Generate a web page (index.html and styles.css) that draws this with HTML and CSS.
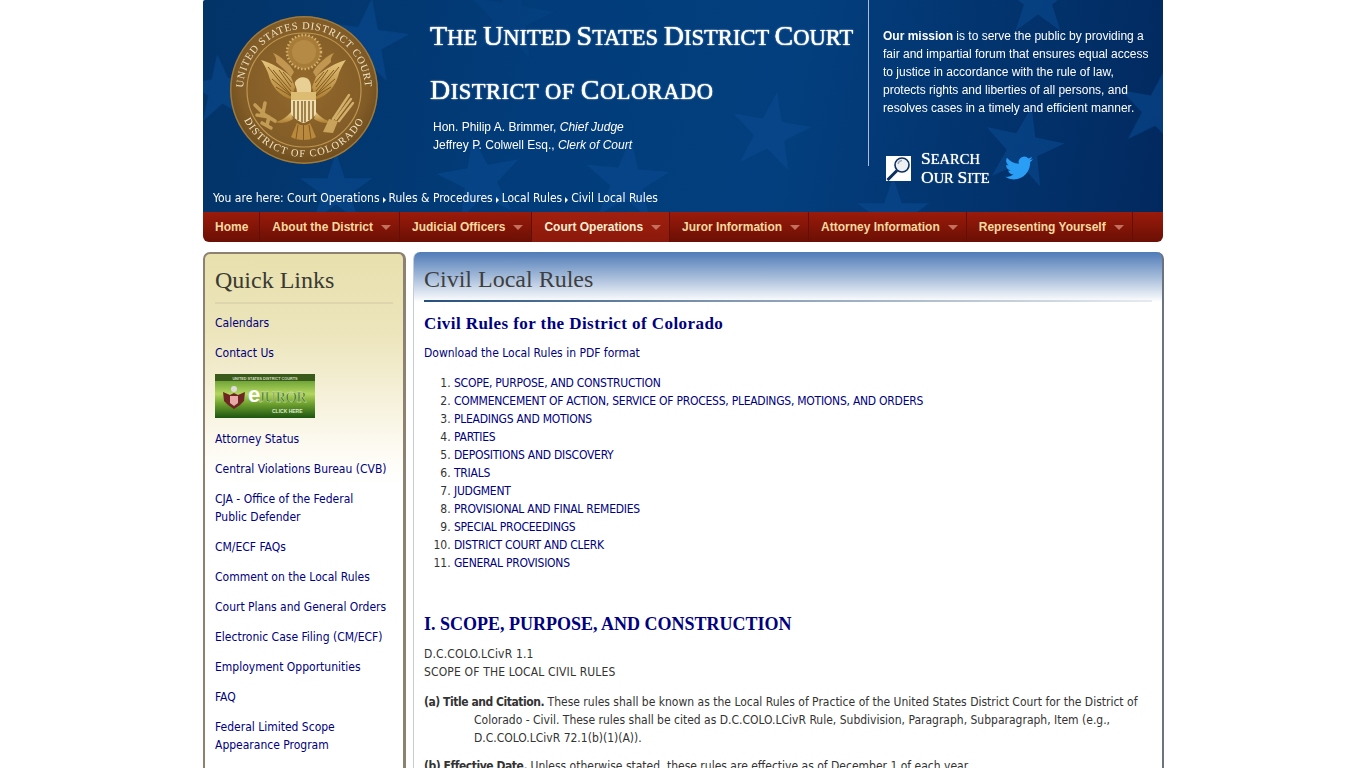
FILE: index.html
```html
<!DOCTYPE html>
<html lang="en">
<head>
<meta charset="utf-8">
<title>Civil Local Rules - District of Colorado</title>
<link rel="stylesheet" href="styles.css">
</head>
<body>
<div class="page">
  <header class="masthead">
    <svg class="stars" viewBox="0 0 960 212" aria-hidden="true">
      <defs>
        <polygon id="star" points="0,-1 .23,-.31 .95,-.31 .37,.12 .59,.81 0,.38 -.59,.81 -.37,.12 -.95,-.31 -.23,-.31"/>
      </defs>
      <g class="star-a">
        <use href="#star" transform="translate(163,42) rotate(8) scale(44)"/>
        <use href="#star" transform="translate(18,90) rotate(-6) scale(36)"/>
        <use href="#star" transform="translate(133,190) rotate(0) scale(38)"/>
        <use href="#star" transform="translate(277,180) rotate(-10) scale(44)"/>
        <use href="#star" transform="translate(424,182) rotate(5) scale(44)"/>
        <use href="#star" transform="translate(567,133) rotate(10) scale(42)"/>
        <use href="#star" transform="translate(820,148) rotate(12) scale(42)"/>
        <use href="#star" transform="translate(955,110) rotate(10) scale(42)"/>
        <use href="#star" transform="translate(690,215) rotate(0) scale(38)"/>
        <use href="#star" transform="translate(835,0) rotate(0) scale(38)"/>
      </g>
      <g class="star-b">
        <use href="#star" transform="translate(307,18) rotate(10) scale(44)"/>
      </g>
    </svg>
    <div class="mast-main">
      <svg class="seal" viewBox="0 0 150 150" role="img" aria-label="Seal of the United States District Court">
        <defs>
          <radialGradient id="sealFill" cx=".5" cy=".45" r=".55">
            <stop offset="0" stop-color="#94692c"/>
            <stop offset=".8" stop-color="#825c27"/>
            <stop offset="1" stop-color="#6e4d1e"/>
          </radialGradient>
          <linearGradient id="gold" x1="0" y1="0" x2="0" y2="1">
            <stop offset="0" stop-color="#e6c67c"/>
            <stop offset="1" stop-color="#ad7e32"/>
          </linearGradient>
          <path id="arcTop" d="M14 75 a61 61 0 0 1 122 0"/>
          <path id="arcBot" d="M8 75 a67 67 0 0 0 134 0"/>
          <g id="wing">
            <path d="M32 45 C42 48 54 54 62 62 L66 72 L62 84 C52 82 42 72 39 58 C37 53 35 49 32 45Z" fill="url(#gold)"/>
            <path d="M62 80 L39 52 M62 80 L43 64 M62 81 L47 72 M62 76 L44 55 M62 72 L50 55 M63 68 L54 57" stroke="#805a20" stroke-width="1" fill="none"/>
            <path d="M44 38 C50 40 62 50 65 57 L62 62 C57 55 50 50 47 47 C48 44 46 41 44 38Z" fill="#c09650"/>
            <path d="M46 107 C52 106 58 102 62 97 L64 104 C58 108 52 109 46 107Z" fill="url(#gold)"/>
          </g>
        </defs>
        <circle cx="75" cy="75" r="74" fill="#a17a3a"/>
        <circle cx="75" cy="75" r="72.5" fill="url(#sealFill)"/>
        <circle cx="75" cy="75" r="57" fill="none" stroke="#bd9750" stroke-width="1.2"/>
        <text class="seal-text"><textPath href="#arcTop" startOffset="50%">UNITED STATES DISTRICT COURT</textPath></text>
        <text class="seal-text seal-text-low"><textPath href="#arcBot" startOffset="50%">DISTRICT OF COLORADO</textPath></text>
        <circle cx="75" cy="37" r="17" fill="#a67c38" stroke="#d6b06a" stroke-width="2.5" stroke-dasharray="1.5 2"/>
        <circle cx="75" cy="37" r="12" fill="#b58a45"/>
        <use href="#wing"/>
        <use href="#wing" transform="translate(149,0) scale(-1,1)"/>
        <path d="M68 78 C68 71 65 70 66 67 C69 61 77 61 80 65 C83 70 82 74 82 78Z" fill="#e8d094"/>
        <rect x="62" y="77" width="25" height="8" fill="#dcbb72"/>
        <path d="M62 85 H87 V99 C84 104 78 107 74.5 108 C71 107 65 104 62 99Z" fill="#eedfb2"/>
        <path d="M65 86 V103 M69 86 V105 M73 86 V107 M76 86 V107 M80 86 V105 M84 86 V103" stroke="#8a6628" stroke-width="1.5"/>
        <path d="M68 108 L62 122 C68 126 81 126 87 122 L81 108 C78 111 71 111 68 108Z" fill="#b98a3e"/>
        <path d="M69 110 L67 124 M74.5 110 V125 M80 110 L82 124" stroke="#805a20" stroke-width="1"/>
        <path d="M46 106 L33 98 M40 102 L28 100 M40 102 L38 110 M34 98 L26 90 M34 98 L36 88 M33 108 L42 113" stroke="#c29b55" stroke-width="3.6" stroke-linecap="round" fill="none"/>
        <path d="M104 104 L120 80 M107 104 L122 84 M110 106 L124 88" stroke="#d3b06a" stroke-width="2.4" stroke-linecap="round" fill="none"/>
        <path d="M100 104 L109 106 L104 118 L94 117Z" fill="#c9a35c"/>
      </svg>
      <div class="titles">
        <h1 class="court"><span class="cap">T</span>he <span class="cap">U</span>nited <span class="cap">S</span>tates <span class="cap">D</span>istrict <span class="cap">C</span>ourt</h1>
        <h2 class="court court-sub"><span class="cap">D</span>istrict of <span class="cap">C</span>olorado</h2>
        <p class="officers">Hon. Philip A. Brimmer, <em>Chief Judge</em><br>Jeffrey P. Colwell Esq., <em>Clerk of Court</em></p>
      </div>
      <aside class="mission">
        <p class="mission-text"><strong>Our mission</strong> is to serve the public by providing a fair and impartial forum that ensures equal access to justice in accordance with the rule of law, protects rights and liberties of all persons, and resolves cases in a timely and efficient manner.</p>
        <div class="mast-tools">
          <svg class="search-icon" viewBox="0 0 25 25" aria-hidden="true">
            <rect width="25" height="25" fill="#fff"/>
            <line x1="1.5" y1="24" x2="11" y2="14.5" stroke="#0b2f5e" stroke-width="3"/>
            <circle cx="16" cy="9" r="7" fill="#eef1f4" stroke="#0b2f5e" stroke-width="1.6"/>
            <path d="M12 8 a4.5 4.5 0 0 1 4 -3.5" stroke="#9aa6b4" stroke-width="1.4" fill="none"/>
          </svg>
          <span class="search-label"><span class="search-cap">S</span>earch<br><span class="search-cap">O</span>ur <span class="search-cap">S</span>ite</span>
          <svg class="twitter" viewBox="0 0 24 24" aria-hidden="true"><path d="M23.953 4.57a10 10 0 01-2.825.775 4.958 4.958 0 002.163-2.723c-.951.555-2.005.959-3.127 1.184a4.92 4.92 0 00-8.384 4.482C7.69 8.095 4.067 6.13 1.64 3.162a4.822 4.822 0 00-.666 2.475c0 1.71.87 3.213 2.188 4.096a4.904 4.904 0 01-2.228-.616v.06a4.923 4.923 0 003.946 4.827 4.996 4.996 0 01-2.212.085 4.936 4.936 0 004.604 3.417 9.867 9.867 0 01-6.102 2.105c-.39 0-.779-.023-1.17-.067a13.995 13.995 0 007.557 2.209c9.053 0 13.998-7.496 13.998-13.985 0-.21 0-.42-.015-.63A9.935 9.935 0 0024 4.59z"/></svg>
        </div>
      </aside>
    </div>
    <p class="crumbs">You are here: Court Operations<i class="crumb-arrow"></i>Rules &amp; Procedures<i class="crumb-arrow"></i>Local Rules<i class="crumb-arrow"></i>Civil Local Rules</p>
  </header>

  <nav class="mainnav">
    <a class="nav-item nav-home" href="#">Home</a>
    <a class="nav-item has-menu" href="#">About the District</a>
    <a class="nav-item has-menu" href="#">Judicial Officers</a>
    <a class="nav-item has-menu is-active" href="#">Court Operations</a>
    <a class="nav-item has-menu" href="#">Juror Information</a>
    <a class="nav-item has-menu" href="#">Attorney Information</a>
    <a class="nav-item has-menu" href="#">Representing Yourself</a>
  </nav>

  <div class="columns">
    <aside class="quick">
      <h2 class="quick-title">Quick Links</h2>
      <ul class="quick-list">
        <li><a href="#">Calendars</a></li>
        <li><a href="#">Contact Us</a></li>
        <li class="banner-row">
          <svg class="ejuror" viewBox="0 0 100 44" role="img" aria-label="eJuror, click here">
            <defs>
              <linearGradient id="ej" x1="0" y1="0" x2="0" y2="1">
                <stop offset="0" stop-color="#4b8a22"/>
                <stop offset=".45" stop-color="#b3d65f"/>
                <stop offset=".68" stop-color="#6ea12f"/>
                <stop offset="1" stop-color="#1c5410"/>
              </linearGradient>
            </defs>
            <rect width="100" height="44" fill="url(#ej)"/>
            <rect width="100" height="7" fill="#3a5a1c"/>
            <text class="ej-top" x="50" y="5.5" text-anchor="middle">UNITED STATES DISTRICT COURTS</text>
            <path d="M8 18 L15 21 L19 19 L23 21 L30 18 L29 27 L25 31 L19 35 L13 31 L9 27Z" fill="#6e2622"/>
            <path d="M15 22 H23 V29 L19 32 L15 29Z" fill="#e8a9a8"/>
            <circle cx="19" cy="15" r="3" fill="#ddd"/>
            <text class="ej-e" x="33" y="28">e</text>
            <text class="ej-main" x="44" y="28">JUROR</text>
            <text class="ej-click" x="57" y="38.5">CLICK HERE</text>
          </svg>
        </li>
        <li><a href="#">Attorney Status</a></li>
        <li><a href="#">Central Violations Bureau (CVB)</a></li>
        <li><a href="#">CJA - Office of the Federal Public Defender</a></li>
        <li><a href="#">CM/ECF FAQs</a></li>
        <li><a href="#">Comment on the Local Rules</a></li>
        <li><a href="#">Court Plans and General Orders</a></li>
        <li><a href="#">Electronic Case Filing (CM/ECF)</a></li>
        <li><a href="#">Employment Opportunities</a></li>
        <li><a href="#">FAQ</a></li>
        <li><a href="#">Federal Limited Scope Appearance Program</a></li>
      </ul>
    </aside>

    <main class="content">
      <h1 class="content-title">Civil Local Rules</h1>
      <div class="content-body">
        <h2 class="rules-title">Civil Rules for the District of Colorado</h2>
        <p class="block"><a href="#">Download the Local Rules in PDF format</a></p>
        <ol class="toc">
          <li><a href="#">SCOPE, PURPOSE, AND CONSTRUCTION</a></li>
          <li><a href="#">COMMENCEMENT OF ACTION, SERVICE OF PROCESS, PLEADINGS, MOTIONS, AND ORDERS</a></li>
          <li><a href="#">PLEADINGS AND MOTIONS</a></li>
          <li><a href="#">PARTIES</a></li>
          <li><a href="#">DEPOSITIONS AND DISCOVERY</a></li>
          <li><a href="#">TRIALS</a></li>
          <li><a href="#">JUDGMENT</a></li>
          <li><a href="#">PROVISIONAL AND FINAL REMEDIES</a></li>
          <li><a href="#">SPECIAL PROCEEDINGS</a></li>
          <li><a href="#">DISTRICT COURT AND CLERK</a></li>
          <li><a href="#">GENERAL PROVISIONS</a></li>
        </ol>
        <h2 class="section-title">I. SCOPE, PURPOSE, AND CONSTRUCTION</h2>
        <p class="block rule-id">D.C.COLO.LCivR 1.1<br>SCOPE OF THE LOCAL CIVIL RULES</p>
        <p class="block hanging"><strong>(a) Title and Citation.</strong> These rules shall be known as the Local Rules of Practice of the United States District Court for the District of Colorado - Civil. These rules shall be cited as D.C.COLO.LCivR Rule, Subdivision, Paragraph, Subparagraph, Item (e.g., D.C.COLO.LCivR 72.1(b)(1)(A)).</p>
        <p class="block hanging"><strong>(b) Effective Date.</strong> Unless otherwise stated, these rules are effective as of December 1 of each year.</p>
      </div>
    </main>
  </div>
</div>
</body>
</html>
```
FILE: styles.css
```css
* { box-sizing: border-box; }
html, body { margin: 0; padding: 0; height: 768px; overflow: hidden; background: #fff; }
body { font-family: "DejaVu Sans Condensed", "DejaVu Sans", sans-serif; font-stretch: condensed; font-size: 12px; line-height: 18px; color: #333; }
a { color: #000080; text-decoration: none; }
p, h1, h2, ul, ol { margin: 0; padding: 0; }

.page { width: 960px; margin: 0 auto; }

/* masthead */
.masthead { position: relative; height: 212px; overflow: hidden; background: linear-gradient(100deg, #033468 0%, #023c7a 35%, #033f7e 60%, #02295f 100%); border-top-left-radius: 2px; }
.stars { position: absolute; left: 0; top: 0; width: 960px; height: 212px; }
.star-a { fill: #0a4a8f; opacity: .6; }
.star-b { fill: #0a4a8f; opacity: .25; }
.mast-main { position: relative; display: flex; height: 189px; }
.seal { width: 150px; height: 150px; margin: 15px 0 0 26px; flex: none; }
.seal-text { font-family: "Liberation Serif", serif; font-size: 10.5px; fill: #efe3c2; text-anchor: middle; letter-spacing: .75px; font-stretch: normal; }
.seal-text-low { letter-spacing: 1.2px; }
.titles { width: 439px; margin-left: 51px; flex: none; padding-top: 19px; }
.court { font-family: "Liberation Serif", serif; font-stretch: normal; font-weight: 400; font-size: 22.5px; line-height: 34px; letter-spacing: .04px; text-transform: uppercase; color: #fff; -webkit-text-stroke: .2px #fff; text-shadow: 0 0 1px #fff, 0 0 2px rgba(190,215,245,.7); white-space: nowrap; }
.court .cap { font-size: 28px; }
.court-sub { margin-top: 18px; letter-spacing: .5px; }
.officers { margin: 9px 0 0 3px; font-family: "Liberation Sans", sans-serif; font-stretch: normal; color: #fff; }
.mission { width: 295px; flex: none; margin-left: -1px; height: 166px; border-left: 1px solid #a9bdd6; padding: 27px 0 0 14px; }
.mission-text { font-family: "Liberation Sans", sans-serif; font-stretch: normal; color: #fff; width: 270px; }
.mast-tools { display: flex; align-items: center; margin: 32px 0 0 3px; }
.search-icon { width: 25px; height: 25px; flex: none; }
.search-label { margin-left: 10px; width: 84px; font-family: "Liberation Serif", serif; font-stretch: normal; font-weight: 400; font-size: 14.5px; line-height: 18px; text-transform: uppercase; color: #fff; text-shadow: 0 0 1px #fff; white-space: nowrap; }
.search-cap { font-size: 17.5px; }
.twitter { width: 28px; height: 28px; fill: #2a9df4; flex: none; }
.crumbs { position: relative; margin-left: 10px; color: #fff; white-space: nowrap; }
.crumb-arrow { display: inline-block; width: 0; height: 0; margin: 0 3px 0 3px; border-left: 3px solid #fff; border-top: 3px solid transparent; border-bottom: 3px solid transparent; vertical-align: -1px; }

/* main navigation */
.mainnav { display: flex; height: 30px; background: linear-gradient(#9a1b0b, #6b0f05); border-radius: 0 0 6px 6px; overflow: hidden; }
.nav-item { display: block; padding: 0 8px 0 12px; line-height: 31px; font-family: "Liberation Sans", sans-serif; font-stretch: normal; font-weight: 700; color: #f9d99f; border-right: 1px solid #650e05; white-space: nowrap; }
.nav-home { padding-right: 11px; }
.nav-item.has-menu::after { content: ""; display: inline-block; width: 0; height: 0; margin-left: 8px; border-left: 5px solid transparent; border-right: 5px solid transparent; border-top: 5px solid #c5705c; vertical-align: 1px; }
.nav-item.is-active { background: linear-gradient(#a0200f, #8a190b); color: #fdeed0; }

/* columns */
.columns { display: flex; align-items: flex-start; gap: 7px; margin-top: 10px; }
.quick { width: 203px; flex: none; height: 700px; border: 2px solid #8d8272; border-right-width: 3px; border-radius: 7px 7px 0 0; background: linear-gradient(#e8e0ad 0, #ece5bc 80px, #f5f0d8 140px, #fcfaf0 190px, #fff 230px); padding: 10px 10px 0 10px; }
.quick-title { font-family: "Liberation Serif", serif; font-stretch: normal; font-weight: 400; font-size: 24px; line-height: 32px; color: #3a3a32; padding-bottom: 6px; border-bottom: 2px solid #dcd5ae; }
.quick-list { list-style: none; margin-top: 10px; padding-right: 5px; }
.quick-list li { margin-bottom: 12px; }
.quick-list .banner-row { height: 44px; margin-bottom: 12px; }
.ejuror { display: block; width: 100px; height: 44px; }
.ej-top { font-family: "Liberation Sans", sans-serif; font-size: 3.8px; font-weight: 700; fill: #d8dcc0; font-stretch: normal; }
.ej-e { font-family: "Liberation Sans", sans-serif; font-size: 22px; font-weight: 700; fill: #fff; font-stretch: normal; }
.ej-main { font-family: "Liberation Serif", serif; font-size: 15px; fill: #1d5a1a; stroke: #e8f3c8; stroke-width: .3px; font-stretch: normal; }
.ej-click { font-family: "Liberation Sans", sans-serif; font-size: 5px; font-weight: 700; fill: #dfe9c8; font-stretch: normal; }

.content { width: 751px; flex: none; height: 700px; border: 1px solid #c4ccd8; border-right: 2px solid #6c7280; border-top: 0; border-radius: 7px 7px 0 0; background: linear-gradient(#4f7bb7 0, #a8bedb 26px, #fff 50px); padding: 0 10px; }
.content-title { height: 50px; padding-top: 11px; font-family: "Liberation Serif", serif; font-stretch: normal; font-weight: 400; font-size: 24px; line-height: 32px; color: #3f3f3f; border-bottom: 2px solid; border-image: linear-gradient(90deg, #25507c, #7f95ae 40%, #e6ebf0 100%) 1; }
.rules-title { margin-top: 12px; font-family: "Liberation Serif", serif; font-stretch: normal; font-size: 17px; line-height: 20px; letter-spacing: .43px; color: #000080; }
.block { margin-top: 11px; }
.content-body .rules-title + .block { margin-top: 10px; }
.toc { margin-top: 12px; padding-left: 30px; }
.toc a { letter-spacing: -.25px; }
.section-title { margin-top: 41px; font-family: "Liberation Serif", serif; font-stretch: normal; font-size: 18px; line-height: 22px; color: #000080; }
.section-title + .block { margin-top: 10px; }
.rule-id { letter-spacing: .15px; }
.hanging { margin-top: 12px; padding-left: 50px; text-indent: -50px; padding-right: 6px; }
.hanging strong { letter-spacing: -.45px; }
.hanging + .hanging { margin-top: 10px; }
```
